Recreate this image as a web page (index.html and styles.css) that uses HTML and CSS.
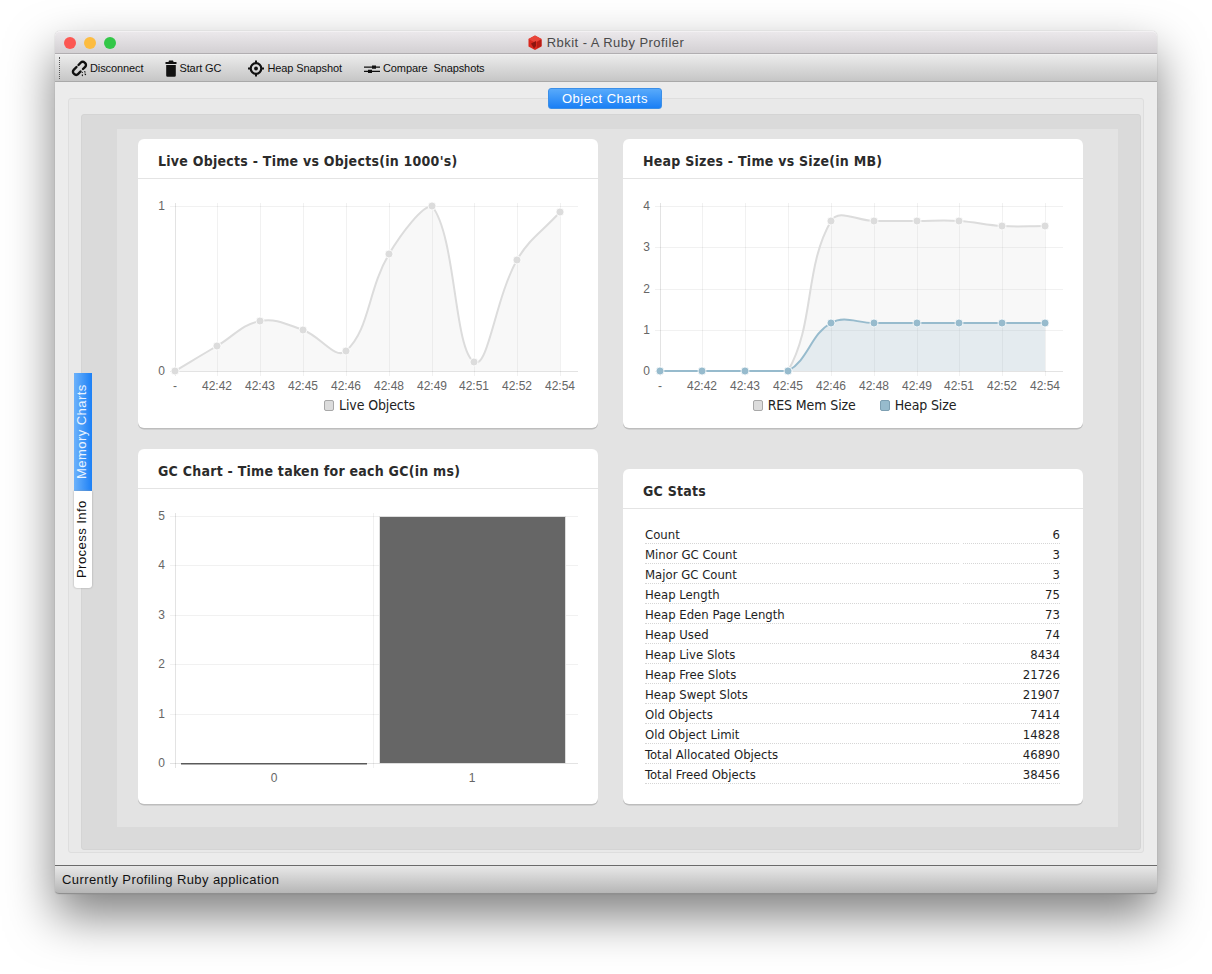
FILE: index.html
```html
<!DOCTYPE html>
<html lang="en">
<head>
<meta charset="utf-8">
<title>Rbkit - A Ruby Profiler</title>
<link rel="stylesheet" href="styles.css">
</head>
<body>
<div class="window">
  <header class="titlebar">
    <div class="lights"><span class="light red"></span><span class="light yellow"></span><span class="light green"></span></div>
    <div class="title">
      <svg class="logo" width="14" height="15" viewBox="0 0 14 15"><path d="M7 0.5 13.5 4v7.5L7 15 .5 11.5V4z" fill="#d9281e"/><path d="M7 .5 13.5 4 7 7.5.5 4z" fill="#e8453a"/><path d="M3 8.5 8 6v5l-2 2.5z" fill="#8e1510"/><path d="M9 7l4.500-2.500v6.500L9 13z" fill="#b81d15"/></svg>
      <span>Rbkit - A Ruby Profiler</span>
    </div>
  </header>
  <nav class="toolbar">
    <span class="handle"></span>
    <a class="tool tool-disconnect">
      <svg width="17" height="17" viewBox="0 0 17 17" fill="none" stroke="#111" stroke-width="2.400" stroke-linecap="round"><path d="M7.500 5 9.900 2.500a2.500 2.500 0 0 1 3.600 0l.7.700a2.500 2.500 0 0 1 0 3.600L12 9"/><path d="M5.500 7 2.700 9.900a2.500 2.500 0 0 0 0 3.600l.7.700a2.500 2.500 0 0 0 3.600 0L9.500 11.500"/><path d="M11.300 12.300v.1M13.500 11.800l.6.300M11.300 14.800l.1.800M14 14l.6.600" stroke-width="1.100"/></svg>
      <span>Disconnect</span>
    </a>
    <a class="tool tool-gc">
      <svg width="12" height="17" viewBox="0 0 12 17"><path d="M4 .5h4l.6 1.500H11.500v2H.5V2h3zM1.200 5h9.600v10.500a1.300 1.300 0 0 1-1.300 1.300h-7a1.300 1.300 0 0 1-1.300-1.300z" fill="#111"/></svg>
      <span>Start GC</span>
    </a>
    <a class="tool tool-heap">
      <svg width="16" height="17" viewBox="0 0 16 17" fill="none" stroke="#111"><circle cx="8" cy="8.500" r="5.300" stroke-width="2.200"/><circle cx="8" cy="8.500" r="1.900" fill="#111" stroke="none"/><path d="M8 .5v3M8 13.500v3M0 8.500h3M13 8.500h3" stroke-width="2"/></svg>
      <span>Heap Snapshot</span>
    </a>
    <a class="tool tool-compare">
      <svg width="16" height="17" viewBox="0 0 16 17" fill="#111"><path d="M0 6.500h8V5.500h4v1h4v1.200h-4v1H8v-1H0zM0 10.800h4v-1h4v1h8V12H8v1H4v-1H0z"/></svg>
      <span class="pre">Compare  Snapshots</span>
    </a>
  </nav>
  <main class="main">
    <button class="top-tab">Object Charts</button>
    <div class="side-tabs">
      <span class="side-tab active">Memory Charts</span>
      <span class="side-tab">Process Info</span>
    </div>
    <div class="frame">
      <div class="frame-inner">
        <div class="board">
          <section class="card">
            <h2 class="card-title">Live Objects - Time vs Objects(in 1000's)</h2>
            <svg class="chart" id="live" viewBox="138 179 460 215"></svg>
            <div class="legend"><span class="key"><i class="swatch gray"></i>Live Objects</span></div>
          </section>
          <section class="card">
            <h2 class="card-title">Heap Sizes - Time vs Size(in MB)</h2>
            <svg class="chart" id="heap" viewBox="623 179 460 215"></svg>
            <div class="legend"><span class="key"><i class="swatch gray"></i>RES Mem Size</span><span class="key"><i class="swatch blue"></i>Heap Size</span></div>
          </section>
          <section class="card">
            <h2 class="card-title">GC Chart - Time taken for each GC(in ms)</h2>
            <svg class="chart" id="gc" viewBox="138 489 460 315"></svg>
          </section>
          <section class="card stats-card">
            <h2 class="card-title">GC Stats</h2>
            <div class="stats">
              <span>Count</span><span>6</span>
              <span>Minor GC Count</span><span>3</span>
              <span>Major GC Count</span><span>3</span>
              <span>Heap Length</span><span>75</span>
              <span>Heap Eden Page Length</span><span>73</span>
              <span>Heap Used</span><span>74</span>
              <span>Heap Live Slots</span><span>8434</span>
              <span>Heap Free Slots</span><span>21726</span>
              <span>Heap Swept Slots</span><span>21907</span>
              <span>Old Objects</span><span>7414</span>
              <span>Old Object Limit</span><span>14828</span>
              <span>Total Allocated Objects</span><span>46890</span>
              <span>Total Freed Objects</span><span>38456</span>
            </div>
          </section>
        </div>
      </div>
    </div>
  </main>
  <footer class="statusbar">Currently Profiling Ruby application</footer>
</div>
<script src="chart.js"></script>
</body>
</html>
```
FILE: styles.css
```css
* { box-sizing: border-box; }
html, body { margin: 0; background: #fff; }
body { padding: 31px 55px 80px; font-family: "Liberation Sans", Arial, sans-serif; }

.window {
  width: 1102px; height: 863px; display: flex; flex-direction: column;
  border-radius: 5px 5px 4px 4px;
  box-shadow: 0 22px 48px rgba(0,0,0,.5), 0 0 1px rgba(0,0,0,.35);
}

.titlebar {
  height: 23px; position: relative; display: flex; align-items: center; justify-content: center;
  background: linear-gradient(#ebe8eb, #d3d0d3);
  border-top: 1px solid #f3f1f3; border-bottom: 1px solid #b1aeb1;
  border-radius: 5px 5px 0 0;
}
.lights { position: absolute; left: 9px; top: 5px; display: flex; gap: 8px; }
.light { width: 12px; height: 12px; border-radius: 50%; }
.red { background: #fc5753; }
.yellow { background: #fdbc40; }
.green { background: #33c748; }
.title { display: flex; align-items: center; gap: 5px; font-size: 13px; color: #4a4a4a; letter-spacing: .45px; }
.logo { display: block; }

.toolbar {
  height: 28px; display: flex; align-items: center; position: relative; padding-left: 16px;
  background: linear-gradient(#ebebeb, #c6c6c6);
  border-top: 1px solid #f0f0f0; border-bottom: 1px solid #a9a9a9;
  font-size: 11px; color: #111; letter-spacing: -.1px;
}
.handle { position: absolute; left: 4px; top: 2px; height: 22px; border-left: 1px dotted #555; }
.tool { display: flex; align-items: center; gap: 2px; }
.tool svg { display: block; }
.tool-gc { margin-left: 22px; }
.tool-heap { margin-left: 27px; gap: 3px; }
.tool-compare { margin-left: 22px; gap: 3px; }
.pre { white-space: pre; }

.main { flex: 1; min-height: 0; position: relative; background: #ececec; padding: 16px 13px 12px; }
.top-tab {
  position: absolute; left: 493px; top: 6px; width: 114px; height: 21px; padding: 0;
  border: 1px solid #3b8fe8; border-radius: 3px;
  background: linear-gradient(#58aafb, #1a7ff5);
  color: #fff; font: 13px "Liberation Sans", Arial, sans-serif; letter-spacing: .5px;
}
.side-tabs { position: absolute; left: 19px; top: 291px; width: 18px; z-index: 1; }
.side-tab {
  display: flex; align-items: center; justify-content: center; width: 18px; padding-left: 3px;
  writing-mode: vertical-rl; transform: rotate(180deg);
  font-size: 13px; letter-spacing: .45px;
}
.side-tab.active { height: 118px; background: linear-gradient(to left, #6cb2fb, #1c80f6); color: #eaf3ff; }
.side-tab:not(.active) { height: 97px; background: #fff; color: #111; border-radius: 3px 3px 0 0; box-shadow: 0 0 2px #9a9a9a; }

.frame {
  height: 100%; padding: 15px 2px 2px 12px; background: #e9e9e9;
  border: 1px solid #dedede; border-radius: 3px;
}
.frame-inner {
  height: 100%; padding: 14px 22px 22px 35px; background: #dadada;
  border: 1px solid #d4d4d4; border-radius: 3px;
}
.board {
  height: 100%; background: #e3e3e3; padding: 10px 35px 0 21px;
  display: grid; grid-template-columns: 460px 460px; grid-template-rows: 289px 355px; column-gap: 25px; row-gap: 21px;
}

.card { background: #fff; border-radius: 6px; box-shadow: 0 1.500px 0 #bdbdbd; display: flex; flex-direction: column; }
.stats-card { margin-top: 20px; }
.card-title {
  margin: 0; height: 40px; padding: 5px 0 0 20px; display: flex; align-items: center;
  font: bold 14px "DejaVu Sans", sans-serif; font-stretch: condensed; letter-spacing: .25px; color: #2b2b2b;
  border-bottom: 1px solid #e4e4e4; flex: none;
}
.chart { display: block; width: 460px; flex: none; }

.legend { display: flex; justify-content: center; gap: 24px; padding-left: 3px; font: 14px "DejaVu Sans", sans-serif; font-stretch: condensed; letter-spacing: -.12px; color: #222; margin-top: 3px; }
.key { display: flex; align-items: center; gap: 5px; }
.swatch { display: block; width: 10px; height: 11px; border-radius: 2px; border: 1px solid #a8a8a8; }
.swatch.gray { background: #dcdcdc; }
.swatch.blue { background: #97bbcd; border-color: #7d9fb2; }

.stats {
  padding: 15px 0 0 22px; display: grid; grid-template-columns: 314px 97px; column-gap: 4px; justify-content: start;
  font: 13px "DejaVu Sans", sans-serif; font-stretch: condensed; color: #1e1e1e;
}
.stats span { height: 20px; line-height: 22px; border-bottom: 1px dotted #d6d6d6; white-space: nowrap; }
.stats span:nth-child(even) { text-align: right; }

.statusbar {
  height: 29px; padding: 6px 0 0 7px; font-size: 13px; letter-spacing: .4px; color: #111;
  border-top: 1px solid #6b6b6b; border-bottom: 1px solid #8f8f8f;
  background: linear-gradient(#e8e8e8, #b6b6b6);
  border-radius: 0 0 4px 4px;
}

.grid { stroke: rgba(0,0,0,.055); stroke-width: 1; }
.axis { stroke: rgba(0,0,0,.11); stroke-width: 1; }
.tick { font: 12px "Liberation Sans", Arial, sans-serif; fill: #666; }
.mid { text-anchor: middle; }
.end { text-anchor: end; }
.line { fill: none; stroke-width: 2; }
.pt { stroke: #fff; stroke-width: .8; }
.c-gray .line { stroke: #dcdcdc; }
.c-gray .area { fill: rgba(220,220,220,.2); }
.c-gray .pt { fill: #dcdcdc; }
.c-blue .line { stroke: #97bbcd; }
.c-blue .area { fill: rgba(151,187,205,.2); }
.c-blue .pt { fill: #97bbcd; }
.bar { fill: #666; stroke: #ddd; stroke-width: 1; }
.bar-flat { fill: #5a5a5a; }
```
FILE: chart.js
```js
var NS = 'http://www.w3.org/2000/svg';
function el(parent, name, attrs, text) {
  var e = document.createElementNS(NS, name);
  for (var k in attrs) e.setAttribute(k, attrs[k]);
  if (text !== undefined) e.textContent = text;
  parent.appendChild(e);
  return e;
}
function line(svg, cls, x1, y1, x2, y2) {
  el(svg, 'line', { 'class': cls, x1: x1, y1: y1, x2: x2, y2: y2 });
}
// Same control points as Chart.js bezier lines (tension .4), capped to the plot area
function curve(pts) {
  var d = 'M' + pts[0][0] + ' ' + pts[0][1], t = 0.4, ctl = [];
  function cap(v) { return [v[0], Math.min(371, Math.max(206, v[1]))]; }
  for (var i = 0; i < pts.length; i++) {
    var p = pts[i], a = pts[i - 1] || p, b = pts[i + 1] || p;
    var d1 = Math.hypot(p[0] - a[0], p[1] - a[1]), d2 = Math.hypot(b[0] - p[0], b[1] - p[1]);
    var s = d1 + d2 || 1, fa = t * d1 / s, fb = t * d2 / s;
    ctl.push({
      i: cap([p[0] - fa * (b[0] - a[0]), p[1] - fa * (b[1] - a[1])]),
      o: cap([p[0] + fb * (b[0] - a[0]), p[1] + fb * (b[1] - a[1])])
    });
  }
  for (var j = 1; j < pts.length; j++) {
    d += 'C' + ctl[j - 1].o.map(function (v) { return v.toFixed(1); }).join(' ') + ' ' +
      ctl[j].i.map(function (v) { return v.toFixed(1); }).join(' ') + ' ' + pts[j].join(' ');
  }
  return d;
}
function yLabels(svg, labels, x0, xr, xl) {
  labels.forEach(function (l) {
    line(svg, l[0] === '0' ? 'axis' : 'grid', x0 - 5, l[1] + 0.5, xr, l[1] + 0.5);
    el(svg, 'text', { 'class': 'tick end', x: xl, y: l[1] + 4 }, l[0]);
  });
}
function lineChart(id, xs, labels, series, x0, xr, xl) {
  var svg = document.getElementById(id);
  var names = ['-', '42:42', '42:43', '42:45', '42:46', '42:48', '42:49', '42:51', '42:52', '42:54'];
  xs.forEach(function (x, i) {
    line(svg, i ? 'grid' : 'axis', x + 0.5, 203, x + 0.5, 376);
    el(svg, 'text', { 'class': 'tick mid', x: x, y: 390 }, names[i]);
  });
  yLabels(svg, labels, x0, xr, xl);
  series.forEach(function (s) {
    var g = el(svg, 'g', { 'class': s.cls });
    var pts = s.ys.map(function (y, i) { return [xs[i], y]; });
    var d = curve(pts);
    el(g, 'path', { 'class': 'area', d: d + 'L' + xs[xs.length - 1] + ' 371L' + xs[0] + ' 371Z' });
    el(g, 'path', { 'class': 'line', d: d });
    pts.forEach(function (p) { el(g, 'circle', { 'class': 'pt', cx: p[0], cy: p[1], r: 4 }); });
  });
}
lineChart('live',
  [175, 217, 260, 303, 346, 389, 432, 474, 517, 560],
  [['1', 206], ['0', 371]],
  [{ cls: 'c-gray', ys: [371, 346, 321, 330, 351, 254, 206, 362, 260, 212] }],
  175, 578, 165);
lineChart('heap',
  [660, 702, 745, 788, 831, 874, 917, 959, 1002, 1045],
  [['4', 206], ['3', 247], ['2', 289], ['1', 330], ['0', 371]],
  [
    { cls: 'c-gray', ys: [371, 371, 371, 371, 221, 221, 221, 221, 226, 226] },
    { cls: 'c-blue', ys: [371, 371, 371, 371, 323, 323, 323, 323, 323, 323] }
  ],
  660, 1063, 650);
(function () {
  var svg = document.getElementById('gc');
  yLabels(svg, [['5', 516], ['4', 565], ['3', 615], ['2', 664], ['1', 714], ['0', 763]], 175, 578, 165);
  [175, 373].forEach(function (x, i) { line(svg, i ? 'grid' : 'axis', x + 0.5, 513, x + 0.5, 768); });
  el(svg, 'rect', { 'class': 'bar', x: 379.5, y: 516.5, width: 186, height: 247 });
  el(svg, 'rect', { 'class': 'bar-flat', x: 181, y: 763, width: 186, height: 1.5 });
  el(svg, 'text', { 'class': 'tick mid', x: 274, y: 782 }, '0');
  el(svg, 'text', { 'class': 'tick mid', x: 472, y: 782 }, '1');
})();
```
